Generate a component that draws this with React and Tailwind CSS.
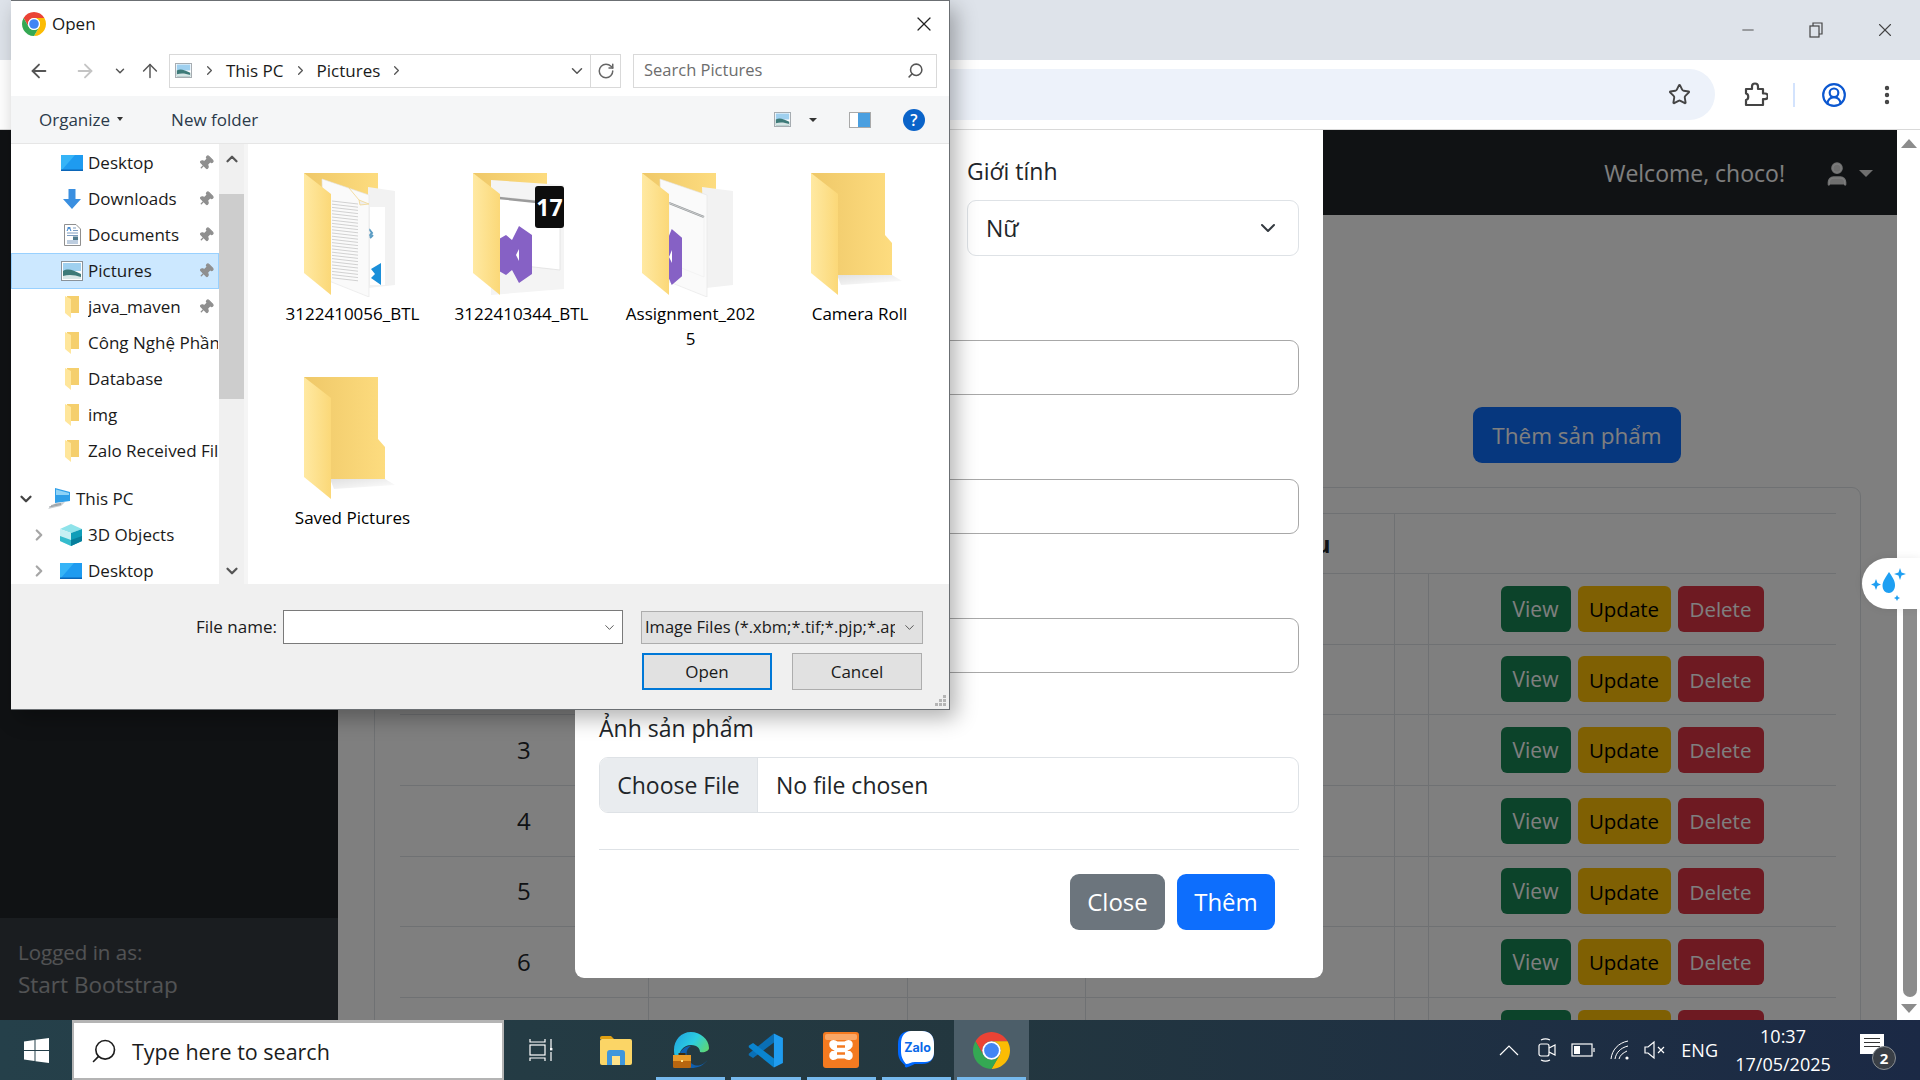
import React from 'react';
import {
  ArrowLeft, ArrowRight, ArrowUp, ChevronDown, ChevronRight, ChevronUp, RotateCw, Search, Star, X, Pin,
  CircleUserRound, EllipsisVertical, Minus, User,
} from 'lucide-react';

const ChromeLogo = ({ size = 24 }) => (
  <svg width={size} height={size} viewBox="4 4 40 40">
    <path d="M6.68 14A20 20 0 0 1 41.32 14L24 14A10 10 0 0 0 15.34 29Z" fill="#ea4335" />
    <path d="M41.32 14A20 20 0 0 1 24 44L32.66 29A10 10 0 0 0 24 14Z" fill="#fbbc04" />
    <path d="M24 44A20 20 0 0 1 6.68 14L15.34 29A10 10 0 0 0 32.66 29Z" fill="#34a853" />
    <circle cx="24" cy="24" r="10" fill="#fff" />
    <circle cx="24" cy="24" r="8" fill="#4285f4" />
  </svg>
);

const PictureIcon = ({ w = 22, h = 20 }) => (
  <svg width={w} height={h} viewBox="0 0 22 20">
    <rect x="0.5" y="0.5" width="21" height="19" fill="#fff" stroke="#8a9299" />
    <rect x="2" y="2" width="18" height="8" fill="#9fd0ef" />
    <path d="M2 10C7 7 12 9 20 13V18H2Z" fill="#3d7a78" />
    <path d="M2 15C8 13 14 14 20 16V18H2Z" fill="#d8e6e6" />
  </svg>
);

const DesktopIcon = () => (
  <svg width="22" height="16" viewBox="0 0 22 16">
    <rect width="22" height="16" fill="#1e9bf0" />
    <path d="M0 16L14 0H0Z" fill="#36b4f7" />
    <rect y="14.5" width="22" height="1.5" fill="#0b66b8" />
  </svg>
);

const DownloadIcon = () => (
  <svg width="20" height="20" viewBox="0 0 20 20">
    <path d="M6.5 0H13.5V10H19L10 20L1 10H6.5Z" fill="#3a8fe0" />
  </svg>
);

const DocumentIcon = () => (
  <svg width="17" height="22" viewBox="0 0 17 22">
    <path d="M.5.5H12L16.5 5V21.5H.5Z" fill="#fff" stroke="#8f8f8f" />
    <path d="M3 4H7M9 4H12M9 6.5H14M3 9H14M3 11.5H14M3 17H14M3 19H14" stroke="#7c9cc0" />
    <rect x="9" y="12.5" width="5" height="3.5" fill="#4f7a8c" />
    <path d="M3 7L5 3L7 7" stroke="#2f7fd0" fill="none" />
  </svg>
);

const SmallFolder = () => (
  <svg width="15" height="22" viewBox="0 0 15 22">
    <path d="M2 0H14V17H2Z" fill="#f5cf6d" />
    <path d="M0 0L6 3V22L0 17Z" fill="#ffe69b" />
  </svg>
);

const ComputerIcon = () => (
  <svg width="24" height="22" viewBox="0 0 24 22">
    <path d="M8 0L23 4V13L8 15Z" fill="#2f9fe8" />
    <path d="M9 1.5L22 5V7L9 7Z" fill="#8fd3f7" />
    <path d="M9 15L18 14L14 18L1 21L4 18Z" fill="#c8cdd1" />
    <path d="M2 19L14 16.5M4 17.5L14 15.5" stroke="#8a8f94" strokeWidth="0.7" />
  </svg>
);

const CubeIcon = () => (
  <svg width="22" height="22" viewBox="0 0 22 22">
    <path d="M11 0L22 5L11 9L0 5Z" fill="#8fe3ea" />
    <path d="M0 5L11 9V22L0 17Z" fill="#c6f0f3" />
    <path d="M22 5L11 9V22L22 17Z" fill="#0f9db8" />
    <path d="M11 16L22 12V17L11 22Z" fill="#077f9c" />
    <path d="M11 16L0 12V17L11 22Z" fill="#35bccd" />
  </svg>
);

// big explorer folders, 92x122 box
const folderDefs = (
  <defs>
    <linearGradient id="fback" x1="0" x2="1" y1="0" y2="0">
      <stop offset="0" stopColor="#efc868" />
      <stop offset="1" stopColor="#fddc7f" />
    </linearGradient>
    <linearGradient id="fflap" x1="0" x2="1" y1="0" y2="0">
      <stop offset="0" stopColor="#ffe9a2" />
      <stop offset="1" stopColor="#fbd878" />
    </linearGradient>
    <linearGradient id="fshadow" x1="0" x2="1" y1="0" y2="1">
      <stop offset="0" stopColor="#000" stopOpacity="0.12" />
      <stop offset="1" stopColor="#000" stopOpacity="0" />
    </linearGradient>
  </defs>
);

const FLAP = '0,0 27,21 27,122 0,100';

const PlainFolder = () => (
  <svg width="92" height="122" viewBox="0 0 92 122">
    {folderDefs}
    <polygon points="26,102 81,102 91,108 30,112" fill="url(#fshadow)" />
    <polygon points="0,0 74,0 74,62 81,70 81,102 26,102 0,60" fill="url(#fback)" />
    <polygon points={FLAP} fill="url(#fflap)" />
  </svg>
);

const DocsFolder = () => (
  <svg width="92" height="124" viewBox="0 0 92 124">
    {folderDefs}
    <polygon points="0,0 74,0 74,40 0,40" fill="url(#fback)" />
    <polygon points="64,14 91,18 91,112 64,115" fill="#f2f2f2" />
    <rect x="66" y="34" width="15" height="78" fill="#fff" />
    <path d="M65 56l3 4-3 3M66 65l3-3" stroke="#5a9cc4" strokeWidth="2" fill="none" />
    <path d="M77 90v22l-10-7 4-4-4-5z" fill="#1b8fd9" />
    <polygon points="18,6 65,22 65,124 20,106" fill="#fafafa" stroke="#e4e4e4" strokeWidth="0.6" />
    <path d="M45 15l10 12 10 4-9 1-1-5" stroke="#f1d58f" fill="#eee" strokeWidth="0.8" />
    {Array.from({ length: 25 }).map((_, i) => (
      <line key={i} x1="28" x2="54" y1={28 + i * 3.2} y2={28 + i * 3.2 + 3} stroke="#c7c7c7" strokeWidth="0.8" />
    ))}
    <polygon points={FLAP} fill="url(#fflap)" />
  </svg>
);

const VsShape = ({ x, y, w, h }) => (
  <polygon
    transform={`translate(${x} ${y}) scale(${w / 33} ${h / 57})`}
    points="20,0 33,9 33,48 20,57 13,44 7,49 0,45 0,13 7,9 13,14"
    fill="#8661c5"
  />
);

const VsFolder = () => (
  <svg width="92" height="122" viewBox="0 0 92 122">
    {folderDefs}
    <polygon points="0,0 74,0 74,40 0,40" fill="url(#fback)" />
    <polygon points="18,7 91,12 91,116 18,122" fill="#f4f4f4" />
    <polygon points="26,24 87,30 87,97 26,90" fill="#fff" stroke="#d8d8d8" strokeWidth="0.6" />
    <line x1="26" y1="25" x2="64" y2="29" stroke="#9b9b9b" strokeWidth="2.4" />
    <VsShape x={26} y={53} w={33} h={57} />
    <polygon points="46,76 43,82 46,88" fill="#fff" />
    <rect x="62" y="13" width="29" height="42" rx="3" fill="#0d0d0d" />
    <text x="76.5" y="43" textAnchor="middle" fontSize="23" fontWeight="700" fill="#fff" fontFamily="Open Sans, sans-serif">17</text>
    <polygon points={FLAP} fill="url(#fflap)" />
  </svg>
);

const AssignmentFolder = () => (
  <svg width="92" height="124" viewBox="0 0 92 124">
    {folderDefs}
    <polygon points="0,0 74,0 74,40 0,40" fill="url(#fback)" />
    <polygon points="60,14 91,18 91,112 64,115" fill="#f2f2f2" />
    <polygon points="18,6 65,22 65,124 20,106" fill="#fafafa" stroke="#e4e4e4" strokeWidth="0.6" />
    <line x1="27" y1="30" x2="62" y2="44" stroke="#969a9c" strokeWidth="2.4" />
    <polygon points="27,30 62,44 62,104 27,90" fill="none" stroke="#eee" strokeWidth="0.6" />
    <VsShape x={14} y={56} w={26} h={56} />
    <polygon points="30,77 27,84 30,90" fill="#fff" />
    <polygon points={FLAP} fill="url(#fflap)" />
  </svg>
);

const navItems = [
  { label: 'Desktop', icon: <DesktopIcon />, pin: true },
  { label: 'Downloads', icon: <DownloadIcon />, pin: true },
  { label: 'Documents', icon: <DocumentIcon />, pin: true },
  { label: 'Pictures', icon: <PictureIcon />, pin: true, active: true },
  { label: 'java_maven', icon: <SmallFolder />, pin: true },
  { label: 'Công Nghệ Phần mềm', icon: <SmallFolder /> },
  { label: 'Database', icon: <SmallFolder /> },
  { label: 'img', icon: <SmallFolder /> },
  { label: 'Zalo Received Files', icon: <SmallFolder /> },
];

const NavRow = ({ item }) => (
  <div
    className={`h-9 flex items-center pl-[49px] border ${
      item.active ? 'bg-[#cce8ff] border-[#99d1ff]' : 'border-transparent'
    }`}
  >
    <span className="w-[22px] shrink-0 flex justify-center">{item.icon}</span>
    <span className="ml-[5px] flex-1 overflow-hidden whitespace-nowrap">{item.label}</span>
    {item.pin && <Pin size={16} className="shrink-0 text-[#8f8f8f] fill-[#8f8f8f] rotate-45 ml-1 mr-1" />}
  </div>
);

const files = [
  { name: '3122410056_BTL', icon: <DocsFolder /> },
  { name: '3122410344_BTL', icon: <VsFolder /> },
  { name: <>Assignment_202<br />5</>, icon: <AssignmentFolder /> },
  { name: 'Camera Roll', icon: <PlainFolder /> },
  { name: 'Saved Pictures', icon: <PlainFolder /> },
];

const OpenDialog = () => (
  <div className="absolute left-[11px] top-0 w-[939px] h-[710px] bg-white border-y border-r border-[#6b6f73] shadow-[6px_8px_20px_rgba(0,0,0,0.3)] flex flex-col text-[17px] text-[#1a1a1a]">
    {/* title bar */}
    <div className="h-[45px] flex items-center pl-[11px] pr-[13px] shrink-0">
      <ChromeLogo size={24} />
      <span className="ml-[6px]">Open</span>
      <X size={24} strokeWidth={1.2} className="ml-auto text-[#222]" />
    </div>

    {/* address row */}
    <div className="h-[50px] flex items-center shrink-0 pb-px">
      <ArrowLeft size={22} strokeWidth={2} className="ml-[17px] text-[#555]" />
      <ArrowRight size={22} strokeWidth={2} className="ml-6 text-[#c4c4c4]" />
      <ChevronDown size={14} strokeWidth={2.5} className="ml-[17px] text-[#555]" />
      <ArrowUp size={22} strokeWidth={1.6} className="ml-[12px] text-[#555]" />
      <div className="ml-[8px] w-[452px] h-[34px] border border-[#d9d9d9] flex items-center">
        <span className="ml-[3px]"><PictureIcon w={21} h={15} /></span>
        <ChevronRight size={15} strokeWidth={2} className="ml-[8px] text-[#555]" />
        <span className="ml-[9px]">This PC</span>
        <ChevronRight size={15} strokeWidth={2} className="ml-[9px] text-[#555]" />
        <span className="ml-[9px]">Pictures</span>
        <ChevronRight size={15} strokeWidth={2} className="ml-[9px] text-[#555]" />
        <ChevronDown size={18} strokeWidth={2} className="ml-auto mr-[4px] text-[#555]" />
        <div className="w-[30px] h-full border-l border-[#d9d9d9] flex items-center justify-center">
          <RotateCw size={18} strokeWidth={2} className="text-[#666]" />
        </div>
      </div>
      <div className="ml-3 w-[304px] h-[34px] border border-[#d9d9d9] flex items-center pl-[10px] pr-[12px] text-[16.5px] text-[#6d6d6d]">
        Search Pictures
        <Search size={17} strokeWidth={2.2} className="ml-auto -scale-x-100 text-[#555]" />
      </div>
    </div>

    {/* command bar */}
    <div className="h-[48px] shrink-0 bg-[#f5f6f7] border-b border-[#e6e6e6] flex items-center pl-[28px] text-[#2b3a4a]">
      <span>Organize</span>
      <span className="ml-[7px] mb-[2px] w-0 h-0 border-x-[3px] border-x-transparent border-t-[4px] border-t-[#333]" />
      <span className="ml-[48px]">New folder</span>
      <span className="ml-auto"><PictureIcon w={21} h={15} /></span>
      <span className="ml-[16px] w-0 h-0 border-x-[4px] border-x-transparent border-t-[4px] border-t-[#333]" />
      <span className="ml-[32px] w-[22px] h-[16px] border border-[#a9a9a9] bg-white flex justify-end">
        <span className="w-[12px] h-full bg-[#4a9fe0]" />
      </span>
      <span className="ml-[32px] mr-[24px] w-[22px] h-[22px] rounded-full bg-[#0a63c9] text-white text-[16px] font-semibold flex items-center justify-center">?</span>
    </div>

    {/* nav + files */}
    <div className="flex-1 min-h-0 flex">
      <div className="w-[208px] shrink-0 overflow-hidden pt-px">
        {navItems.map((item) => (
          <NavRow key={item.label} item={item} />
        ))}
        <div className="h-9 mt-3 flex items-center pl-[6px]">
          <ChevronDown size={18} strokeWidth={3} className="text-[#444]" />
          <span className="ml-[12px]"><ComputerIcon /></span>
          <span className="ml-[5px]">This PC</span>
        </div>
        <div className="h-9 flex items-center pl-[19px]">
          <ChevronRight size={18} strokeWidth={3} className="text-[#a6a6a6]" />
          <span className="ml-[12px]"><CubeIcon /></span>
          <span className="ml-[6px]">3D Objects</span>
        </div>
        <div className="h-9 flex items-center pl-[19px]">
          <ChevronRight size={18} strokeWidth={3} className="text-[#a6a6a6]" />
          <span className="ml-[12px]"><DesktopIcon /></span>
          <span className="ml-[6px]">Desktop</span>
        </div>
      </div>
      <div className="w-[25px] shrink-0 bg-[#f0f0f0] flex flex-col items-center">
        <ChevronUp size={18} strokeWidth={3} className="text-[#555] mt-[6px]" />
        <div className="w-full h-[205px] mt-[26px] bg-[#cdcdcd]" />
        <ChevronDown size={18} strokeWidth={3} className="text-[#555] mt-auto mb-[4px]" />
      </div>
      <div className="w-[4px] shrink-0 bg-[#f5f5f5]" />
      <div className="flex-1 pl-[20px] pt-[29px] grid grid-cols-[repeat(4,169px)] grid-rows-[204px_auto] text-black">
        {files.map((file, i) => (
          <div key={i} className="flex flex-col">
            <div className="ml-[36px] h-[124px]">{file.icon}</div>
            <div className="mt-[4px] text-center leading-[25px]">{file.name}</div>
          </div>
        ))}
      </div>
    </div>

    {/* footer */}
    <div className="h-[125px] shrink-0 bg-[#f0f0f0] relative pt-[26px]">
      <div className="flex items-center">
        <span className="ml-[185px] w-[87px] whitespace-nowrap">File name:</span>
        <div className="w-[340px] h-[34px] bg-white border border-[#7a7a7a] flex items-center justify-end pr-[5px]">
          <ChevronDown size={15} strokeWidth={1.4} className="text-[#444]" />
        </div>
        <div className="ml-[18px] w-[282px] h-[33px] bg-[#e1e1e1] border border-[#adadad] flex items-center pl-[3px] pr-[5px] text-[16.5px]">
          <span className="w-[250px] overflow-hidden whitespace-nowrap">Image Files (*.xbm;*.tif;*.pjp;*.apng;*.jpg)</span>
          <ChevronDown size={15} strokeWidth={1.4} className="ml-auto text-[#444]" />
        </div>
      </div>
      <div className="mt-[9px] flex">
        <button className="ml-[631px] w-[130px] h-[37px] bg-[#e1e1e1] border-2 border-[#0078d7]">Open</button>
        <button className="ml-5 w-[130px] h-[37px] bg-[#e1e1e1] border border-[#adadad]">Cancel</button>
      </div>
      <svg className="absolute right-[3px] bottom-[3px]" width="11" height="11" viewBox="0 0 11 11" fill="#b5b5b5">
        <rect x="8" y="0" width="3" height="3" />
        <rect x="4" y="4" width="3" height="3" />
        <rect x="8" y="4" width="3" height="3" />
        <rect x="0" y="8" width="3" height="3" />
        <rect x="4" y="8" width="3" height="3" />
        <rect x="8" y="8" width="3" height="3" />
      </svg>
    </div>
  </div>
);

const ProductModal = () => (
  <div className="absolute left-[575px] top-0 w-[748px] h-[848px] bg-white rounded-b-[9px] pl-6 pr-6 text-[23px] text-[#212529] flex flex-col">
    <div className="grid grid-cols-2 gap-x-[36px] mt-[23px]">
      <div />
      <div>
        <div className="h-9 leading-9">Giới tính</div>
        <div className="mt-[11px] h-[56px] border border-[#dee2e6] rounded-[9px] flex items-center pl-[18px] pr-[18px]">
          Nữ
          <ChevronDown size={24} strokeWidth={2} className="ml-auto text-[#343a40]" />
        </div>
      </div>
    </div>
    <div className="mt-[84px] h-[55px] border border-[#a8a8a8] rounded-[9px]" />
    <div className="mt-[84px] h-[55px] border border-[#a8a8a8] rounded-[9px]" />
    <div className="mt-[84px] h-[55px] border border-[#a8a8a8] rounded-[9px]" />
    <div className="mt-[37px] h-9 leading-9">Ảnh sản phẩm</div>
    <div className="mt-[11px] h-[56px] border border-[#dee2e6] rounded-[9px] flex items-center overflow-hidden">
      <div className="w-[158px] h-full bg-[#e9ecef] border-r border-[#dee2e6] flex items-center justify-center">Choose File</div>
      <div className="pl-[18px]">No file chosen</div>
    </div>
    <div className="mt-[36px] h-px bg-[#dee2e6]" />
    <div className="mt-[24px] flex justify-end gap-3 pr-6">
      <button className="w-[95px] h-[56px] rounded-[9px] bg-[#6c757d] text-white text-[24px]">Close</button>
      <button className="w-[98px] h-[56px] rounded-[9px] bg-[#0d6efd] text-white text-[24px]">Thêm</button>
    </div>
  </div>
);

const rows = [1, 2, 3, 4, 5, 6, 7];

const ProductTable = () => (
  <table className="w-[1436px] table-fixed border-collapse text-[24px] text-[#212529]">
    <colgroup>
      <col className="w-[248px]" />
      <col className="w-[259px]" />
      <col className="w-[178px]" />
      <col className="w-[309px]" />
      <col className="w-[34px]" />
      <col className="w-[408px]" />
    </colgroup>
    <thead>
      <tr className="h-[60px] border-y border-[#dee2e6]">
        <th className="border-r border-[#dee2e6]" />
        <th className="border-r border-[#dee2e6]" />
        <th className="border-r border-[#dee2e6]" />
        <th className="border-r border-[#dee2e6] text-right pr-[63px] font-bold">Màu</th>
        <th colSpan={2} />
      </tr>
    </thead>
    <tbody>
      {rows.map((n) => (
        <tr key={n} className="h-[70.67px] border-b border-[#dee2e6]">
          <td className="text-center border-r border-[#dee2e6]">{n}</td>
          <td className="border-r border-[#dee2e6]" />
          <td className="border-r border-[#dee2e6]" />
          <td className="border-r border-[#dee2e6]" />
          <td className="border-r border-[#dee2e6]" />
          <td className="pl-[72px]">
            <div className="flex gap-[7px]">
              <button className="w-[70px] h-[46px] rounded-[6px] bg-[#198754] text-white text-[21px] pt-px">View</button>
              <button className="w-[93px] h-[46px] rounded-[6px] bg-[#ffc107] text-black text-[20.5px] pt-px">Update</button>
              <button className="w-[86px] h-[46px] rounded-[6px] bg-[#dc3545] text-white text-[20.5px] pt-px">Delete</button>
            </div>
          </td>
        </tr>
      ))}
    </tbody>
  </table>
);

const TaskIcon = ({ children, active, running }) => (
  <div className={`w-[75.2px] h-full relative flex items-center justify-center ${active ? 'bg-[#4c5e69]' : ''}`}>
    {children}
    {running && <div className="absolute bottom-0 left-[3px] right-[3px] h-[3px] bg-[#76b9ed]" />}
  </div>
);

const TrayIcons = () => (
  <div className="flex items-center text-white">
    <svg width="20" height="12" viewBox="0 0 20 12" fill="none" stroke="#fff" strokeWidth="1.2"><path d="M1 11L10 2L19 11" /></svg>
    <svg className="ml-[19px]" width="18" height="24" viewBox="0 0 18 24" fill="none" stroke="#fff" strokeWidth="1.2">
      <rect x="1" y="6" width="10" height="12" rx="2" />
      <path d="M11 10L17 7V17L11 14M3 2C6 0.5 9 0.5 12 2M3 22C6 23.5 9 23.5 12 22" />
    </svg>
    <svg className="ml-[15px]" width="24" height="14" viewBox="0 0 24 14" fill="none" stroke="#fff" strokeWidth="1.2">
      <rect x="1" y="1" width="20" height="12" />
      <rect x="3" y="3" width="6" height="8" fill="#fff" stroke="none" />
      <path d="M23 5V9" />
    </svg>
    <svg className="ml-[15px]" width="20" height="20" viewBox="0 0 20 20" fill="none" stroke="#fff" strokeWidth="1">
      <path d="M1 19C2 10 8 3 18 1M5 19C6 13 10 8 18 6M9 19C10 15 13 13 17 11" />
      <circle cx="17" cy="18" r="1.6" fill="#fff" stroke="none" />
    </svg>
    <svg className="ml-[14px]" width="22" height="20" viewBox="0 0 22 20" fill="none" stroke="#fff" strokeWidth="1.2">
      <path d="M1 7V13H4L10 18V2L4 7Z" />
      <path d="M14 7L20 13M20 7L14 13" />
    </svg>
  </div>
);

const Taskbar = () => (
  <div className="h-[60px] shrink-0 flex bg-linear-to-r from-[#25404a] via-[#23373f] to-[#1b2945] text-white">
    <div className="w-[72px] flex items-center justify-center">
      <svg width="25" height="25" viewBox="0 0 25 25" fill="#fff">
        <path d="M0 3.5L10.5 2V12H0ZM11.5 1.8L25 0V12H11.5ZM0 13H10.5V23L0 21.5ZM11.5 13H25V25L11.5 23.2Z" />
      </svg>
    </div>
    <div className="w-[432px] bg-white border-2 border-t-[3px] border-[#b4b4b4] flex items-center pl-[16px] pt-[3px] text-[#1c1c1c] text-[21.5px]">
      <Search size={28} strokeWidth={1.4} className="-scale-x-100 mb-[3px]" />
      <span className="ml-[14px]">Type here to search</span>
    </div>
    <div className="w-[74px] flex items-center justify-center">
      <svg width="24" height="24" viewBox="0 0 24 24" fill="none" stroke="#fff" strokeWidth="1.2">
        <path d="M1 1V4H16V1M1 23V20H16V23" />
        <rect x="1" y="7" width="15" height="10" />
        <path d="M22 1V10M22 14V23" />
        <rect x="21" y="10" width="2.4" height="2.4" fill="#fff" stroke="none" />
      </svg>
    </div>
    <TaskIcon>
      <svg width="32" height="30" viewBox="0 0 32 30">
        <path d="M0 3a2 2 0 0 1 2-2h9l3 3h-14Z" fill="#e0a012" />
        <rect y="4" width="32" height="26" rx="2" fill="#fbd566" />
        <path d="M7 30V18a3 3 0 0 1 3-3H22a3 3 0 0 1 3 3V30H20V21H12V30Z" fill="#3f96dc" />
        <rect x="12" y="21" width="8" height="9" fill="#ffe28a" />
      </svg>
    </TaskIcon>
    <TaskIcon running>
      <svg width="36" height="36" viewBox="0 0 36 36">
        <defs>
          <linearGradient id="edgeTop" x1="0" x2="1" y1="0" y2="0.6">
            <stop offset="0" stopColor="#1f9fe0" />
            <stop offset="0.55" stopColor="#2ccde0" />
            <stop offset="1" stopColor="#62d86c" />
          </linearGradient>
        </defs>
        <path d="M18 0C8 0 1 8 1 18C1 24 3 28 5 30C5 20 10 13 18 13C25 13 27 17 27 20C31 21 36 19 36 16C36 7 27 0 18 0Z" fill="url(#edgeTop)" />
        <path d="M5 30C5 20 11 14 18 14C12 17 12 26 18 31C24 36 31 33 35 27C31 34 24 36 18 36C12 36 8 33 5 30Z" fill="#0f5fb0" />
        <rect x="0" y="23" width="18" height="13" rx="1.5" fill="#b8660f" />
        <rect x="0" y="23" width="18" height="6" fill="#e89a2a" />
        <rect x="5.5" y="21" width="7" height="2" fill="#3a2a10" />
        <rect x="8" y="28" width="2" height="2" fill="#ffe28a" />
      </svg>
    </TaskIcon>
    <TaskIcon running>
      <svg width="36" height="37" viewBox="0 0 100 100">
        <polygon points="72,3 72,28 14,71 2,63 2,59" fill="#0a6fb5" />
        <polygon points="2,41 2,37 14,29 72,72 72,97" fill="#0a84cf" />
        <polygon points="72,3 97,15 97,85 72,97" fill="#1f9cf0" />
      </svg>
    </TaskIcon>
    <TaskIcon running>
      <svg width="36" height="36" viewBox="0 0 36 36">
        <rect width="36" height="36" rx="3" fill="#f47a20" />
        <rect x="2" y="2" width="32" height="6" rx="2" fill="#f9a766" />
        <path d="M14 11C10 8 7 10 8 14C9 16 11 17 13 18C11 19 9 20 8 22C7 26 10 28 14 25H22C26 28 29 26 28 22C27 20 25 19 23 18C25 17 27 16 28 14C29 10 26 8 22 11Z" fill="#fff" stroke="#fff" strokeWidth="3" />
        <path d="M14 14.500H22M14 21.500H22" stroke="#f47a20" strokeWidth="2.4" />
      </svg>
    </TaskIcon>
    <TaskIcon running>
      <svg width="36" height="38" viewBox="0 0 36 38">
        <path d="M12 0H24C32 0 36 5 36 13V21C36 29 32 33 24 33H18C15 33 14 35 10 36C8 37 6 36 7 34C4 32 0 28 0 21V13C0 5 4 0 12 0Z" fill="#0068ff" />
        <path d="M13 0H24C32 0 36 5 36 13V21C36 27 33 31 27 31H17C13 31 11 33 8 33C5 29 3 26 3 20V13C3 5 7 0 13 0Z" fill="#fff" />
        <text x="19.5" y="21" textAnchor="middle" fontSize="12.5" fontWeight="700" fill="#0a68e8" fontFamily="Inter, sans-serif">Zalo</text>
      </svg>
    </TaskIcon>
    <TaskIcon active running>
      <ChromeLogo size={37} />
    </TaskIcon>
    <div className="ml-auto flex items-center">
      <TrayIcons />
      <span className="ml-[15px] text-[18px]">ENG</span>
      <div className="ml-[13px] w-[104px] text-center text-[18px] leading-[28px]">
        <div>10:37</div>
        <div>17/05/2025</div>
      </div>
      <div className="ml-[25px] mr-[36px] relative w-[24px] h-[28px]">
        <div className="w-[24px] h-[20px] mt-[-2px] bg-white flex flex-col gap-[3px] pt-[4px] px-[4px]">
          <span className="h-px bg-[#333]" />
          <span className="h-px bg-[#333]" />
          <span className="h-px bg-[#333]" />
        </div>
        <div className="absolute left-[12px] top-[10px] w-[24px] h-[24px] rounded-full bg-[#3a3f46] border border-[#8a8f94] text-[15px] font-bold flex items-center justify-center">2</div>
      </div>
    </div>
  </div>
);

const App = () => (
  <div className="relative w-[1920px] h-[1080px] overflow-hidden flex flex-col font-['Open_Sans',sans-serif] bg-white">
    {/* browser chrome */}
    <div className="h-[60px] shrink-0 bg-[#dee3ea] flex items-center justify-end text-[#444]">
      <Minus size={18} strokeWidth={1.2} className="mr-[51px]" />
      <svg className="mr-[50px]" width="16" height="16" viewBox="0 0 16 16" fill="none" stroke="currentColor" strokeWidth="1.2">
        <rect x="2" y="4" width="9" height="11" />
        <path d="M5 4V1H14V12H11" />
      </svg>
      <X size={22} strokeWidth={1.2} className="mr-6" />
    </div>
    <div className="h-[70px] shrink-0 bg-white rounded-tr-[9px] border-b border-[#d9d9d9] flex items-center pl-[100px] text-[#444]">
      <div className="flex-1 h-[51px] rounded-full bg-[#edf2fa] flex items-center justify-end pr-[24px] mb-px">
        <Star size={23} strokeWidth={2} />
      </div>
      <svg className="ml-[27px]" width="26" height="26" viewBox="0 0 26 26" fill="none" stroke="currentColor" strokeWidth="2.2" strokeLinejoin="round">
        <path d="M4 7H10V4.500a3 3 0 0 1 6 0V7H21V11.500H23a2.800 2.800 0 0 1 0 5.600H21V23H4V18C7 17.500 7 12 4 11.500Z" />
      </svg>
      <div className="ml-[25px] w-[2px] h-6 bg-[#d3e3fd]" />
      <CircleUserRound size={26} strokeWidth={2} className="ml-[26px] text-[#0b57d0]" />
      <EllipsisVertical size={24} strokeWidth={2.4} className="ml-[28px] mr-[21px]" />
    </div>

    {/* viewport */}
    <div className="flex-1 min-h-0 flex relative">
      <div className="flex-1 min-w-0 relative flex flex-col overflow-hidden">
        <div className="h-[85px] shrink-0 bg-[#212529] flex items-center justify-end text-[23px] text-white pt-[2px]">
          <span>Welcome, choco!</span>
          <User size={28} fill="currentColor" className="ml-[38px] text-white/85" />
          <span className="ml-[8px] mr-6 w-0 h-0 border-x-[7px] border-x-transparent border-t-[7px] border-t-white/85" />
        </div>
        <div className="flex-1 min-h-0 flex">
          <div className="w-[338px] shrink-0 bg-[#212529] flex flex-col">
            <div className="mt-auto h-[102px] bg-[#343a40] pl-[18px] pt-[19px] text-white/55">
              <div className="text-[20.5px] leading-[30px]">Logged in as:</div>
              <div className="text-[22.5px] leading-[36px]">Start Bootstrap</div>
            </div>
          </div>
          <div className="flex-1 min-w-0 px-[36px] pt-[192px] overflow-hidden">
            <div className="flex justify-end pr-[180px]">
              <button className="w-[208px] h-[56px] rounded-[9px] bg-[#0d6efd] text-white text-[22.5px] pt-px">Thêm sản phẩm</button>
            </div>
            <div className="mt-6 border border-[#dee2e6] rounded-[9px] pt-[25px] px-[25px]">
              <ProductTable />
            </div>
          </div>
        </div>
        {/* backdrop */}
        <div className="absolute inset-0 bg-black/50" />
        <ProductModal />
      </div>

      {/* page scrollbar */}
      <div className="w-[23px] shrink-0 bg-white relative flex flex-col items-center">
        <span className="mt-[9px] w-0 h-0 border-x-[8px] border-x-transparent border-b-[9px] border-b-[#8c8c8c]" />
        <div className="mt-[452px] ml-[3px] w-[14px] h-[397px] bg-[#8c8c8c] rounded-b-full" />
        <span className="mt-auto mb-[7px] w-0 h-0 border-x-[8px] border-x-transparent border-t-[9px] border-t-[#8c8c8c]" />
      </div>

      {/* water drop widget */}
      <div className="absolute right-0 top-[428px] w-[58px] h-[51px] bg-white rounded-l-[26px] shadow-[0_0_8px_rgba(0,0,0,0.08)] flex items-center pl-[8px]">
        <svg width="36" height="36" viewBox="0 0 36 36" fill="#1e9ff2">
          <path d="M6 13L7.500 17L11 18.500L7.500 20L6 24L4.500 20L1 18.500L4.500 17Z" />
          <path d="M30 2L31.500 6.500L36 8L31.500 9.500L30 14L28.500 9.500L24 8L28.500 6.500Z" />
          <path d="M27 29L28 31L30 32L28 33L27 35L26 33L24 32L26 31Z" />
          <path d="M19 6C23 12 25 15 25 19.500C25 24 22 27 19 27C15 27 12.500 24 12.500 19.500C12.500 15 16 11 19 6Z" />
        </svg>
      </div>
    </div>

    <Taskbar />

    <OpenDialog />
  </div>
);

export default App;
